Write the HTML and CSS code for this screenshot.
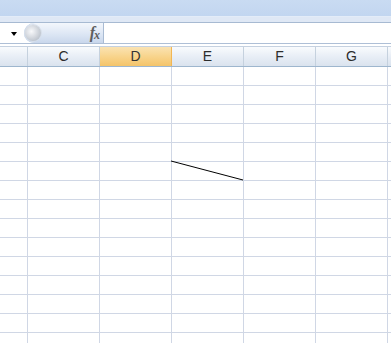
FILE: index.html
```html
<!DOCTYPE html>
<html>
<head>
<meta charset="utf-8">
<link rel="stylesheet" href="styles.css">
</head>
<body>
<div class="app">
  <div class="ribbon"></div>
  <div class="ribbon-gap"></div>
  <div class="fbar">
    <div class="namebox"><span class="arrow"></span></div>
    <div class="pill">
      <span class="knob"></span>
      <span class="fx">f<span class="fx-x">x</span></span>
    </div>
    <div class="input"></div>
  </div>
  <div class="sheet-gap"></div>
  <div class="sheet">
    <div class="hdr">
      <div class="h c0"></div>
      <div class="h">C</div>
      <div class="h sel">D</div>
      <div class="h">E</div>
      <div class="h">F</div>
      <div class="h">G</div>
      <div class="h clast"></div>
    </div>
    <div class="rows" id="rows"></div>
    <svg class="shape" width="391" height="343" viewBox="0 0 391 343">
      <line x1="171" y1="161" x2="243" y2="180" stroke="#000" stroke-width="1"/>
    </svg>
  </div>
</div>
<script src="script.js"></script>
</body>
</html>
```
FILE: script.js
```js
var rows = document.getElementById('rows');
for (var r = 0; r < 15; r++) {
  var row = document.createElement('div');
  row.className = 'row';
  for (var c = 0; c < 7; c++) {
    var cell = document.createElement('div');
    cell.className = 'cell' + (c === 0 ? ' c0' : '') + (c === 6 ? ' clast' : '');
    row.appendChild(cell);
  }
  rows.appendChild(row);
}
```
FILE: styles.css
```css
html, body {
  margin: 0;
  padding: 0;
  background: #ffffff;
  overflow: hidden;
}
.app {
  width: 391px;
  height: 343px;
  position: relative;
  overflow: hidden;
  font-family: "Liberation Sans", Arial, sans-serif;
}
.ribbon {
  height: 16px;
  background: linear-gradient(#c9dbf2, #c2d6f0);
  border-bottom: 1px solid #e3ecf8;
}
.ribbon-gap {
  height: 5px;
  background: #dfe8f5;
}
.fbar {
  display: flex;
  height: 20px;
  border-top: 1px solid #a7bad2;
  border-bottom: 1px solid #aebfd6;
  background: #ffffff;
}
.namebox {
  width: 24px;
  display: flex;
  align-items: center;
  justify-content: flex-start;
  padding-left: 11px;
  box-sizing: border-box;
}
.arrow {
  width: 0;
  height: 0;
  border-left: 3.5px solid transparent;
  border-right: 3.5px solid transparent;
  border-top: 4px solid #000;
  margin-top: 1px;
}
.pill {
  width: 80px;
  height: 20px;
  box-sizing: border-box;
  border-radius: 10px 0 0 10px;
  background: linear-gradient(#f3f7fc, #dfe8f5 50%, #c9d7ec);
  border-right: 1px solid #a9bbd3;
  display: flex;
  align-items: center;
  justify-content: space-between;
  padding: 0 4px 0 1px;
  box-shadow: inset 1px 0 0 #c4d2e6;
}
.knob {
  width: 16px;
  height: 16px;
  border-radius: 50%;
  background: radial-gradient(circle at 40% 40%, #f8f9fb 0, #d5d9df 45%, #b9c0ca 80%, #a8b1be 100%);
  box-shadow: 0 0 0 1px #d7dfea;
}
.fx {
  font-family: "Liberation Serif", "Times New Roman", serif;
  font-style: italic;
  font-weight: bold;
  font-size: 16px;
  color: #5e5e5e;
  line-height: 1;
  margin-top: -1px;
  letter-spacing: -1px;
}
.fx-x {
  font-size: 12px;
  position: relative;
  top: 1px;
}
.input {
  flex: 1;
  background: #ffffff;
}
.sheet-gap {
  height: 2px;
  background: #ffffff;
}
.sheet {
  position: relative;
}
.hdr {
  display: flex;
  height: 21px;
  box-sizing: border-box;
  border-top: 1px solid #c5d1e0;
  border-bottom: 1px solid #9eb6ce;
}
.h {
  width: 72px;
  flex: none;
  box-sizing: border-box;
  border-right: 1px solid #c5d1de;
  background: linear-gradient(#f9fbfd, #e8eef6 50%, #dae3ee);
  text-align: center;
  font-size: 14px;
  line-height: 19px;
  color: #2c2c2c;
}
.h.sel {
  background: linear-gradient(#fae3b3, #f8d48c 50%, #f4c46a);
  border-right-color: #f2b653;
  color: #333;
}
.c0 {
  width: 28px !important;
}
.clast {
  width: 4px !important;
  border-right: none !important;
}
.row {
  display: flex;
  height: 19px;
  box-sizing: border-box;
  border-bottom: 1px solid #d0d7e5;
}
.cell {
  width: 72px;
  flex: none;
  box-sizing: border-box;
  border-right: 1px solid #d0d7e5;
}
.shape {
  position: absolute;
  left: 0;
  top: -46px;
  pointer-events: none;
}
```
